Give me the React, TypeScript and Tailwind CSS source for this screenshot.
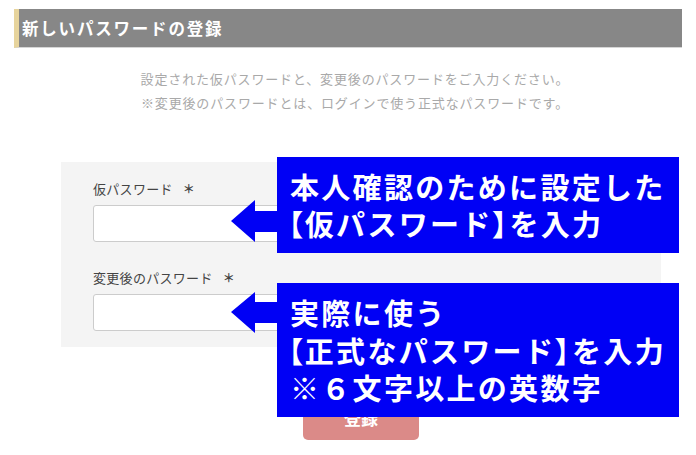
import React from "react";

const jp = { fontFamily: '"Noto Sans CJK JP", "Noto Sans", sans-serif' };

function B({ children }: { children: React.ReactNode }) {
  return <span className="[font-feature-settings:'palt']">{children}</span>;
}

export default function App() {
  return (
    <div className="relative w-[696px] h-[455px] bg-white overflow-hidden" style={jp}>
      {/* header */}
      <div className="mt-[9px] mx-[14px] flex h-[39px] items-center border-l-[5px] border-[#e7d49d] bg-[#878787] border-b border-b-[#d6d6d6] pl-[3px]">
        <span className="text-[16.5px] font-bold text-white tracking-[1.8px] leading-none">新しいパスワードの登録</span>
      </div>

      {/* description */}
      <div className="mt-[19px] ml-[40px] w-[630px] text-center text-[13px] leading-[24px] tracking-[0.85px] text-[#a9a9a9]">
        <p>設定された仮パスワードと、変更後のパスワードをご入力ください。</p>
        <p>※変更後のパスワードとは、ログインで使う正式なパスワードです。</p>
      </div>

      {/* form panel */}
      <div className="mt-[47px] ml-[61px] w-[600px] bg-[#f4f4f4] px-[32px] pt-[17px] pb-[16px]">
        <label className="flex items-center text-[13px] leading-[20px] text-[#444] tracking-[0.3px]">
          仮パスワード<span className="ml-[10px] text-[12px] font-bold">＊</span>
        </label>
        <input className="mt-[6px] block h-[37px] w-full rounded-[3px] border border-[#cccccc] bg-white" type="password" />
        <label className="mt-[26px] flex items-center text-[13px] leading-[20px] text-[#444] tracking-[0.3px]">
          変更後のパスワード<span className="ml-[10px] text-[12px] font-bold">＊</span>
        </label>
        <input className="mt-[6px] block h-[37px] w-full rounded-[3px] border border-[#cccccc] bg-white" type="password" />
      </div>

      {/* button */}
      <div className="mt-[49px] ml-[303px] flex h-[44px] w-[116px] items-center justify-center rounded-[5px] bg-[#db8a88]">
        <span className="text-[17px] font-bold text-white">登録</span>
      </div>

      {/* arrows */}
      <svg className="absolute left-0 top-0" width="696" height="455" viewBox="0 0 696 455">
        <polygon points="231,221 255,200 255,211 280,211 280,232 255,232 255,242" fill="#0000f5" />
        <polygon points="231,312 255,292 255,302 280,302 280,323 255,323 255,333" fill="#0000f5" />
      </svg>

      {/* callout boxes */}
      <div className="absolute left-[277px] top-[157px] w-[402px] h-[96px] overflow-hidden whitespace-nowrap bg-[#0000f5] pl-[13px] pt-[11px] text-white font-bold text-[29px] leading-[37px] tracking-[2.3px]">
        <p>本人確認のために設定した</p>
        <p className="-ml-[2px]"><B>【</B>仮パスワード<B>】</B>を入力</p>
      </div>
      <div className="absolute left-[277px] top-[283px] w-[402px] h-[134px] overflow-hidden whitespace-nowrap bg-[#0000f5] pl-[13px] pt-[11px] text-white font-bold text-[29px] leading-[37.5px] tracking-[2.3px]">
        <p>実際に使う</p>
        <p className="-ml-[2px]"><B>【</B>正式なパスワード<B>】</B>を入力</p>
        <p>※６文字以上の英数字</p>
      </div>
    </div>
  );
}
